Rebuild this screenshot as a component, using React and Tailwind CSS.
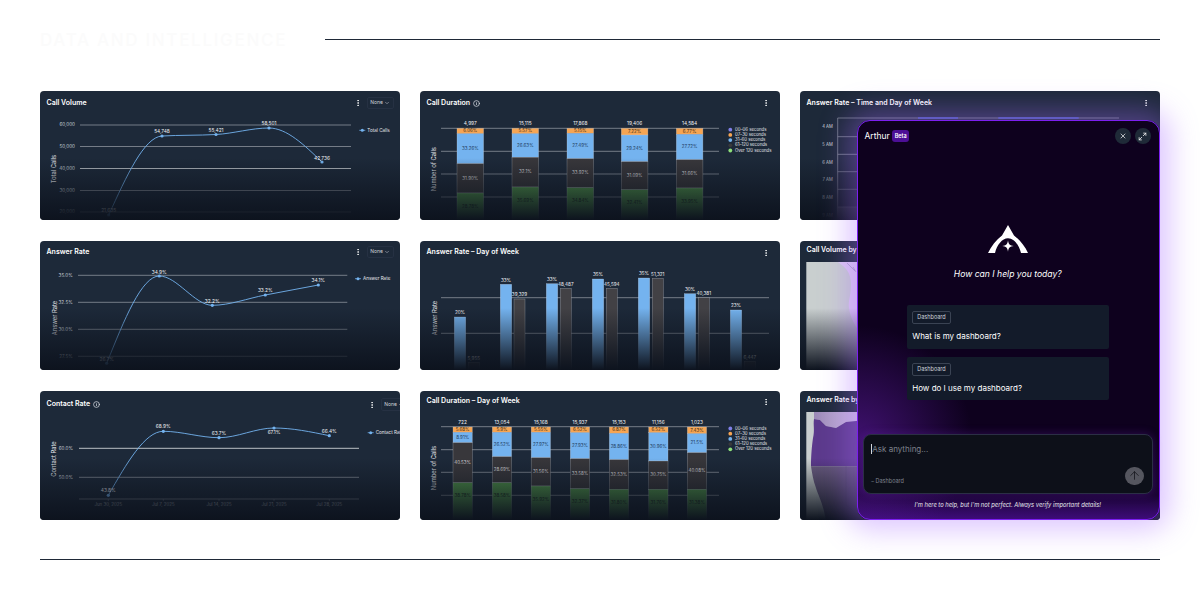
import { ArrowUp, ChevronDown, EllipsisVertical, Info, Maximize2, X } from 'lucide-react';

const BLUE = '#74b3ef';
const ORANGE = '#f6a553';
const DARK = '#38373b';
const GREEN = '#4f9249';
const GRID = '#8b929c';

// monotone-x curve through the points, same look as the chart lib in the picture
function curve(pts) {
  const slopes = pts.slice(1).map((p, i) => (p[1] - pts[i][1]) / (p[0] - pts[i][0]));
  const tan = pts.map((p, i) => {
    if (i === 0 || i === pts.length - 1) return null;
    const h0 = p[0] - pts[i - 1][0];
    const h1 = pts[i + 1][0] - p[0];
    const s0 = slopes[i - 1];
    const s1 = slopes[i];
    const m = (s0 * h1 + s1 * h0) / (h0 + h1);
    return (Math.sign(s0) + Math.sign(s1)) * Math.min(Math.abs(s0), Math.abs(s1), 0.5 * Math.abs(m));
  });
  const n = pts.length - 1;
  tan[0] = (3 * slopes[0] - tan[1]) / 2;
  tan[n] = (3 * slopes[n - 1] - tan[n - 1]) / 2;
  let d = `M${pts[0][0]} ${pts[0][1]}`;
  for (let i = 0; i < n; i++) {
    const h = (pts[i + 1][0] - pts[i][0]) / 3;
    d += `C${pts[i][0] + h} ${pts[i][1] + tan[i] * h} ${pts[i + 1][0] - h} ${pts[i + 1][1] - tan[i + 1] * h} ${pts[i + 1][0]} ${pts[i + 1][1]}`;
  }
  return d;
}

function Card({ title, info, x, y, head = 24, headClass = '', dropdown, dropClass = '', children }) {
  return (
    <div className="relative h-[129px] overflow-hidden rounded-[4px] bg-[#1d2939]">
      <div className={`flex items-center pl-[6.5px] ${head === 21 ? 'h-[21px]' : 'h-[24px]'} ${dropdown ? 'pr-[6.5px]' : 'pr-[10px]'} ${headClass}`}>
        <span className="text-[7px] font-semibold text-white">{title}</span>
        {info && <Info size={7} strokeWidth={2.6} className="ml-[3px] text-gray-300" />}
        <EllipsisVertical size={8} strokeWidth={2.5} className="ml-auto text-white" />
        {dropdown && (
          <div className={`ml-[5px] flex h-[12.5px] w-[27px] shrink-0 items-center justify-center gap-[1px] rounded-[2px] border border-[#263143] text-[5px] text-gray-300 ${dropClass}`}>
            None
            <ChevronDown size={6} />
          </div>
        )}
      </div>
      <svg width="360" height={129 - head} viewBox={`${x} ${y + head} 360 ${129 - head}`} className="text-[5px]">
        {children}
      </svg>
      <div className="pointer-events-none absolute inset-0 bg-[linear-gradient(to_bottom,transparent_52%,#0d131e_100%)]" />
    </div>
  );
}

function YTitle({ x, y, children }) {
  return (
    <text x={x} y={y} transform={`rotate(-90 ${x} ${y})`} textAnchor="middle" dominantBaseline="middle" fill="#e5e7eb" fontSize="5.8">
      {children}
    </text>
  );
}

function LineChart({ grid, x0, x1, labelX, points, labels, legend, title }) {
  return (
    <>
      {grid.map((g) => (
        <g key={g.y}>
          <line x1={x0} x2={x1} y1={g.y} y2={g.y} stroke={g.color || GRID} strokeWidth="0.8" />
          {g.label && (
            <text x={labelX} y={g.y} textAnchor="end" dominantBaseline="middle" fill="#c6ccd4" fontSize="4.6">
              {g.label}
            </text>
          )}
        </g>
      ))}
      <YTitle x={title.x} y={title.y}>{title.text}</YTitle>
      <path d={curve(points)} fill="none" stroke={BLUE} strokeWidth="0.9" />
      {points.map((p, i) => (
        <g key={p[0]}>
          <circle cx={p[0]} cy={p[1]} r="1.6" fill={BLUE} />
          <text x={p[0]} y={labels[i][1]} textAnchor="middle" dominantBaseline="middle" fill="#f3f4f6" fontSize="4.8">
            {labels[i][0]}
          </text>
        </g>
      ))}
      <line x1={legend.x} x2={legend.x + 6} y1={legend.y} y2={legend.y} stroke={BLUE} strokeWidth="0.8" />
      <circle cx={legend.x + 3} cy={legend.y} r="1.5" fill={BLUE} />
      <text x={legend.x + 8} y={legend.y} dominantBaseline="middle" fill="#e5e7eb" fontSize="4.6">
        {legend.text}
      </text>
    </>
  );
}

const legendItems = [
  ['00–06 seconds', '#8080e8'],
  ['07–30 seconds', ORANGE],
  ['31–60 seconds', BLUE],
  ['61–120 seconds', '#3a3a3c'],
  ['Over 120 seconds', '#8ee07a'],
];

function StackedChart({ gridY, bars, legendY, bottom }) {
  const colors = [ORANGE, BLUE, DARK, GREEN];
  const textColors = ['#3b2a14', '#1e3a5c', '#d4d4d8', '#16281a'];
  return (
    <>
      {gridY.map((y) => (
        <line key={y} x1="441" x2="719" y1={y} y2={y} stroke={GRID} strokeWidth="0.8" />
      ))}
      <YTitle x={bars[0].title} y={legendY + 39.5}>Number of Calls</YTitle>
      {bars.map((b) => (
        <g key={b.total + b.x}>
          <text x={b.x + b.w / 2} y={b.ys[0] - 4.6} textAnchor="middle" dominantBaseline="middle" fill="#f3f4f6" fontSize="4.8">
            {b.total}
          </text>
          {b.pct.map((label, i) => {
            const top = b.ys[i];
            const end = i === 3 ? bottom : b.ys[i + 1];
            const mid = i === 3 ? (top + top + 27) / 2 : (top + end) / 2;
            return (
              <g key={label + i}>
                <rect x={b.x} y={top} width={b.w} height={end - top} fill={colors[i]} stroke="#c9ced6" strokeOpacity="0.55" strokeWidth="0.5" />
                <text x={b.x + b.w / 2} y={mid} textAnchor="middle" dominantBaseline="middle" fill={textColors[i]} fontSize="4.5">
                  {label}
                </text>
              </g>
            );
          })}
        </g>
      ))}
      {legendItems.map(([label, color], i) => (
        <g key={label}>
          <circle cx="730.3" cy={legendY + i * 5.2} r="1.9" fill={color} />
          <text x="735" y={legendY + i * 5.2} dominantBaseline="middle" fill="#e5e7eb" fontSize="4.3">
            {label}
          </text>
        </g>
      ))}
    </>
  );
}

const durationBars = [
  { x: 457, ys: [128.3, 133.7, 163.7, 193], total: '4,997', pct: ['6.06%', '33.26%', '31.90%', '28.78%'] },
  { x: 512, ys: [128.3, 133.7, 157.3, 187], total: '15,115', pct: ['5.57%', '26.63%', '32.1%', '35.69%'] },
  { x: 567, ys: [128.3, 133.3, 158.7, 187.7], total: '17,868', pct: ['5.15%', '27.49%', '33.92%', '34.84%'] },
  { x: 621.3, ys: [128.3, 135, 161.7, 189.7], total: '19,406', pct: ['7.22%', '29.24%', '31.09%', '32.41%'] },
  { x: 676.3, ys: [128.3, 134.3, 159.7, 188], total: '14,584', pct: ['6.77%', '27.72%', '31.66%', '33.95%'] },
].map((b) => ({ ...b, w: 26.6, title: 434.5 }));

const weekBars = [
  { x: 453, ys: [427, 432.3, 442.7, 482.7], total: '722', pct: ['5.68%', '8.91%', '40.53%', '38.78%'] },
  { x: 492.3, ys: [427, 432.3, 456.7, 482.7], total: '13,054', pct: ['5.9%', '26.52%', '28.69%', '38.58%'] },
  { x: 531.2, ys: [427, 432.3, 457.7, 486], total: '15,168', pct: ['5.55%', '27.97%', '31.56%', '35.92%'] },
  { x: 570.3, ys: [427, 432.7, 458.7, 488.7], total: '15,937', pct: ['6.52%', '27.93%', '33.58%', '32.37%'] },
  { x: 609.3, ys: [427, 433.3, 459.7, 489.3], total: '15,153', pct: ['6.87%', '28.86%', '32.53%', '31.80%'] },
  { x: 648.7, ys: [427, 432.7, 461, 489.3], total: '11,156', pct: ['6.52%', '30.96%', '30.75%', '31.76%'] },
  { x: 687.3, ys: [427, 433.7, 452.7, 489.3], total: '1,023', pct: ['7.43%', '21.5%', '40.08%', '31.38%'] },
].map((b) => ({ ...b, w: 19.3, title: 434.5 }));

const answerBars = [
  [454.3, 317, '20%', 468.3, 362.3, '5,955'],
  [500.3, 284.3, '33%', 514, 299, '39,329'],
  [546.3, 283.7, '33%', 560.3, 288.3, '48,487'],
  [592.3, 279, '35%', 606.3, 288.3, '45,594'],
  [638.3, 278, '35%', 652.3, 278.3, '51,321'],
  [684.3, 293.7, '30%', 698.3, 297.7, '40,381'],
  [730.3, 310, '23%', 744.3, 361.3, '6,447'],
];

function AnswerBarChart() {
  return (
    <>
      <line x1="441" x2="769" y1="297.7" y2="297.7" stroke={GRID} strokeWidth="0.8" />
      <line x1="441" x2="769" y1="333.3" y2="333.3" stroke={GRID} strokeWidth="0.8" />
      <YTitle x="435" y="318">Answer Rate</YTitle>
      {answerBars.map(([bx, by, bl, dx, dy, dl]) => (
        <g key={bx}>
          <rect x={bx} y={by} width="11.4" height={375 - by} fill={BLUE} stroke="#d8e6f5" strokeOpacity="0.5" strokeWidth="0.5" />
          <rect x={dx} y={dy} width="11" height={375 - dy} fill="#424145" stroke="#c9ced6" strokeOpacity="0.55" strokeWidth="0.5" />
          <text x={bx + 5.7} y={by - 4} textAnchor="middle" dominantBaseline="middle" fill="#f3f4f6" fontSize="4.6">{bl}</text>
          <text x={dx + 5.5} y={dy - 4} textAnchor="middle" dominantBaseline="middle" fill="#f3f4f6" fontSize="4.6">{dl}</text>
        </g>
      ))}
    </>
  );
}

function HeatMap() {
  const rows = [
    ['4 AM', 136.7, 127.3],
    ['5 AM', 154.3, 145.3],
    ['6 AM', 171.7, 163],
    ['7 AM', 189.3, 180.3],
    ['8 AM', 207, 198.3],
  ];
  return (
    <>
      <rect x="837.7" y="207" width="282" height="15" fill="#ffffff" fillOpacity="0.2" />
      <path d="M837.7 240V118H1119" fill="none" stroke="#8b929c" strokeWidth="0.7" />
      {rows.map(([label, line, ty]) => (
        <g key={label}>
          <line x1="837.7" x2="1119" y1={line} y2={line} stroke="#8b929c" strokeWidth="0.7" />
          <text x="832.7" y={ty} textAnchor="end" dominantBaseline="middle" fill="#d1d5db" fontSize="4.2">{label}</text>
        </g>
      ))}
      <text x="832.7" y="216" textAnchor="end" dominantBaseline="middle" fill="#d1d5db" fontSize="4.2">9 AM</text>
      <path d="M918 118H958M998.3 118H1078.7" stroke="#4f62ff" strokeWidth="1.2" />
    </>
  );
}

function VolumeMap() {
  return (
    <>
      <rect x="806.3" y="262" width="60" height="110" fill="#c9cfcf" />
      <path d="M838 262C846 268 851 272 851 285C851 296 848 300 849 308C850 316 853 322 858 330L866 330L866 262Z" fill="#ddc9f0" />
      <path d="M847 263L855 271M853 267L856 272" stroke="#a79cc0" strokeWidth="0.8" fill="none" />
    </>
  );
}

function RateMap() {
  return (
    <>
      <defs>
        <linearGradient id="wa" x1="0" x2="1" y1="0" y2="0">
          <stop offset="0" stopColor="#9a88b6" />
          <stop offset="1" stopColor="#d9c9ea" />
        </linearGradient>
      </defs>
      <rect x="806.3" y="412" width="60" height="110" fill="#c9cfcf" />
      <path d="M814 412H866V420L846 422L836 428L826 426L820 420L814 419Z" fill="url(#wa)" />
      <path d="M814 419L820 420L826 426L836 428L846 422L866 420V466.3H811C811 455 812 445 813 438C815 430 813 425 814 419Z" fill="#5c3a8c" />
      <path d="M811 466.3H866V522H826C824 505 818 495 816 488C813 480 812 473 811 466.3Z" fill="#6a5c80" />
      <path d="M846 466.3V505L866 522" stroke="#5c5170" strokeWidth="0.5" fill="none" />
    </>
  );
}

function Suggestion({ className, children }) {
  return (
    <div className={`rounded-[2px] bg-[#131b2a] px-[5.5px] pt-[6px] ${className}`}>
      <div className="flex h-[13px] w-[38.5px] items-center justify-center rounded-[2px] border border-[#3a4353] text-[5.5px] text-gray-300">
        Dashboard
      </div>
      <p className="mt-[7px] text-[8px] leading-[10px] text-white">{children}</p>
    </div>
  );
}

function ArthurPanel() {
  return (
    <div className="absolute left-[857px] top-[120px] z-10 flex h-[400px] w-[303px] flex-col items-center rounded-[13px] border border-[#7c1ff0] bg-[radial-gradient(circle_at_0%_80%,rgba(96,28,165,0.6),transparent_26%),linear-gradient(to_top,#3d0c78_0%,#1a0434_6%,#0e011e_18%,#0e011e_100%)] pr-[1.5px] shadow-[0_0_28px_10px_rgba(165,105,255,0.38)]">
      <div className="flex h-[30px] w-full items-center px-[6.5px]">
        <span className="text-[8.5px] text-white">Arthur</span>
        <span className="ml-[2.5px] flex h-[12px] w-[17px] items-center justify-center rounded-[3px] bg-[#4c0f96] text-[5.5px] font-semibold text-white">Beta</span>
        <button className="ml-auto flex h-[16px] w-[16px] items-center justify-center rounded-full bg-[#1f2a38] text-white">
          <X size={8} />
        </button>
        <button className="ml-[4px] mr-[0.5px] flex h-[16px] w-[16px] items-center justify-center rounded-full bg-[#1f2a38] text-white">
          <Maximize2 size={9} />
        </button>
      </div>
      <svg width="40" height="28" viewBox="0 0 40 28" className="mt-[73.5px]" fill="#ffffff">
        <path d="M20 0L26 10.5C32 15 37 21.5 40 28H33C31 20 26 13.2 20 13.2C14 13.2 9 20 7 28H0C3 21.5 8 15 14 10.5Z" />
        <path d="M20 15.2C20.6 19.4 21.6 20.4 25.8 21C21.6 21.6 20.6 22.6 20 26.8C19.4 22.6 18.4 21.6 14.2 21C18.4 20.4 19.4 19.4 20 15.2Z" />
      </svg>
      <p className="mt-[16px] text-[8.6px] italic leading-[10px] text-white">How can I help you today?</p>
      <Suggestion className="mt-[26.5px] h-[44px] w-[202px]">What is my dashboard?</Suggestion>
      <Suggestion className="mt-[8px] h-[43px] w-[202px]">How do I use my dashboard?</Suggestion>
      <div className="relative mt-[34px] h-[60px] w-[290px] rounded-[8px] border border-[#2b2f45] bg-[#0d1019] px-[7.5px] shadow-[0_0_10px_rgba(120,40,200,0.3)]">
        <p className="mt-[9px] border-l border-gray-300 text-[8px] leading-[10px] text-[#7d828c]">Ask anything...</p>
        <p className="mt-[23px] text-[5.5px] leading-[8px] text-[#7d828c]">– Dashboard</p>
        <div className="absolute bottom-[8px] right-[8px] flex h-[18.5px] w-[18.5px] items-center justify-center rounded-full bg-[#55565f] text-[#15161c]">
          <ArrowUp size={13} strokeWidth={1.5} />
        </div>
      </div>
      <p className="mt-[6px] text-[5.8px] italic leading-[10px] text-gray-200">I'm here to help, but I'm not perfect. Always verify important details!</p>
    </div>
  );
}

export default function App() {
  return (
    <div className="relative flex h-[600px] w-[1200px] flex-col overflow-hidden bg-white px-10 font-['Inter','Noto_Sans',sans-serif]">
      <div className="flex h-[79px] items-center justify-between">
        <h1 className="mt-[3px] text-[17px] font-medium tracking-[0.1em] text-[#fbfbfb]">DATA AND INTELLIGENCE</h1>
        <div className="h-px w-[835px] bg-[#1f2937]" />
      </div>

      <div className="mt-[12px] grid grid-cols-3 gap-x-5 gap-y-[21px]">
        <Card title="Call Volume" x={40} y={91} dropdown>
          <LineChart
            x0={80}
            x1={351}
            labelX={75}
            grid={[
              { y: 125, label: '60,000' },
              { y: 146.5, label: '50,000' },
              { y: 168.5, label: '40,000', color: '#d1d5db' },
              { y: 190.5, label: '30,000' },
              { y: 212, label: '20,000' },
            ]}
            points={[[108.7, 215], [162, 136], [216, 134.5], [269, 128], [322, 162]]}
            labels={[['21,635', 211], ['54,748', 132], ['55,421', 130.5], ['58,501', 123.5], ['42,736', 158.5]]}
            legend={{ x: 359.3, y: 130.3, text: 'Total Calls' }}
            title={{ x: 54.5, y: 169, text: 'Total Calls' }}
          />
        </Card>
        <Card title="Call Duration" info x={420} y={91}>
          <StackedChart gridY={[128.3, 151.3, 174, 197]} bars={durationBars} legendY={129.7} bottom={235} />
        </Card>
        <Card title="Answer Rate – Time and Day of Week" x={800} y={91}>
          <HeatMap />
        </Card>

        <Card title="Answer Rate" x={40} y={241} headClass="pb-[2px]" dropdown>
          <LineChart
            x0={78}
            x1={347.3}
            labelX={72.7}
            grid={[
              { y: 275.3, label: '35.0%' },
              { y: 302.3, label: '32.5%' },
              { y: 329.3, label: '30.0%' },
              { y: 356.3, label: '27.5%' },
            ]}
            points={[[106.7, 363.3], [159.3, 276], [212.3, 305.3], [265.3, 295], [318.3, 285]]}
            labels={[['26.7%', 359.5], ['34.9%', 272.5], ['32.2%', 301.5], ['33.2%', 291], ['34.1%', 280.5]]}
            legend={{ x: 355, y: 278.7, text: 'Answer Rate' }}
            title={{ x: 55, y: 318, text: 'Answer Rate' }}
          />
        </Card>
        <Card title="Answer Rate – Day of Week" x={420} y={241} headClass="pb-[1px]">
          <AnswerBarChart />
        </Card>
        <Card title="Call Volume by State" x={800} y={241} head={21} headClass="pb-[3px]">
          <VolumeMap />
        </Card>

        <Card title="Contact Rate" info x={40} y={391} headClass="pt-[3px]" dropdown dropClass="mr-[-14px]">
          <LineChart
            x0={79}
            x1={359}
            labelX={73}
            grid={[
              { y: 448.3, label: '60.0%', color: '#e5e7eb' },
              { y: 477.3, label: '50.0%' },
              { y: 499 },
            ]}
            points={[[108.3, 495.3], [163.3, 431.3], [219, 437.7], [274, 428], [329.3, 435.7]]}
            labels={[['43.8%', 491], ['68.9%', 427], ['63.7%', 433.7], ['67.1%', 432.7], ['66.4%', 431.7]]}
            legend={{ x: 367.7, y: 432.7, text: 'Contact Rate' }}
            title={{ x: 54.3, y: 459, text: 'Contact Rate' }}
          />
          {[['Jun 30, 2025', 108.3], ['Jul 7, 2025', 163.3], ['Jul 14, 2025', 219], ['Jul 21, 2025', 274], ['Jul 28, 2025', 329.3]].map(([label, tx]) => (
            <g key={label}>
              <line x1={tx} x2={tx} y1="499" y2="501" stroke={GRID} strokeWidth="0.5" />
              <text x={tx} y="505" textAnchor="middle" dominantBaseline="middle" fill="#c6ccd4" fontSize="4.4">{label}</text>
            </g>
          ))}
        </Card>
        <Card title="Call Duration – Day of Week" x={420} y={391} headClass="pb-[3px]">
          <StackedChart gridY={[426.7, 449.7, 472.3, 495.3]} bars={weekBars} legendY={428.5} bottom={535} />
        </Card>
        <Card title="Answer Rate by State" x={800} y={391} head={21} headClass="pb-[3px]">
          <RateMap />
        </Card>
      </div>

      <div className="mt-[39px] h-px w-full bg-[#1f2937]" />
      <ArthurPanel />
    </div>
  );
}
